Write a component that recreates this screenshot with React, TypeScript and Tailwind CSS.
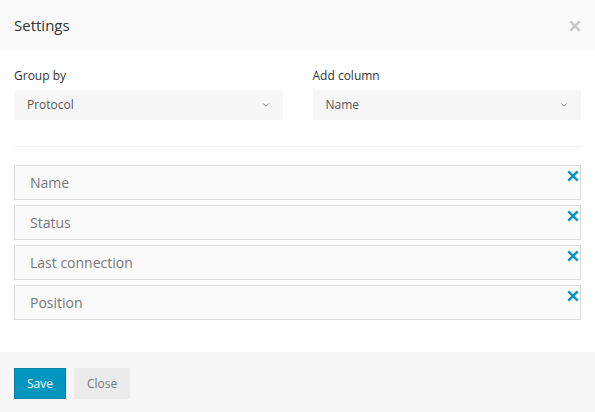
import { ChevronDown } from 'lucide-react';

const columns = ['Name', 'Status', 'Last connection', 'Position'];

function Cross({ className }: { className?: string }) {
  return (
    <svg viewBox="0 0 12 12" className={className} fill="currentColor">
      <path d="M2.2 0.4 6 4.2 9.8 0.4 11.6 2.2 7.8 6 11.6 9.8 9.8 11.6 6 7.8 2.2 11.6 0.4 9.8 4.2 6 0.4 2.2Z" />
    </svg>
  );
}

function SelectBox({ label, value }: { label: string; value: string }) {
  return (
    <div className="flex flex-1 flex-col">
      <label className="mb-[6px] text-[12px] leading-[17px] text-[#333]">{label}</label>
      <div className="flex h-[30px] items-center justify-between bg-[#f7f7f7] pl-[13px] pr-[12px]">
        <span className="text-[12px] text-[#555]">{value}</span>
        <ChevronDown size={10} strokeWidth={2} className="text-[#777]" />
      </div>
    </div>
  );
}

export default function App() {
  return (
    <div className="flex h-[412px] w-[595px] flex-col bg-white font-['Open_Sans',sans-serif]">
      <header className="flex h-[51px] items-center justify-between bg-[#f9f9f9] pl-[14px] pr-[14px]">
        <h4 className="text-[15px] text-[#333]">Settings</h4>
        <Cross className="h-[12px] w-[12px] text-[#c8c8c8]" />
      </header>

      <div className="flex flex-1 flex-col px-[14px] pt-[16px]">
        <div className="flex gap-[30px]">
          <SelectBox label="Group by" value="Protocol" />
          <SelectBox label="Add column" value="Name" />
        </div>

        <hr className="mb-[18px] mt-[26px] border-[#f2f2f2]" />

        <ul className="flex flex-col gap-[5px]">
          {columns.map(col => (
            <li
              key={col}
              className="relative flex h-[35px] items-center border border-[#dcdcdc] bg-[#fafafa] pl-[15px]"
            >
              <span className="text-[14px] text-[#777]">{col}</span>
              <Cross className="absolute right-[1px] top-[4px] h-[12px] w-[12px] text-[#0a96bf]" />
            </li>
          ))}
        </ul>
      </div>

      <footer className="flex h-[60px] items-start gap-[8px] bg-[#f7f7f7] px-[14px] pt-[16px]">
        <button className="h-[31px] border border-[#0384a8] bg-[#0096bf] px-[12px] text-[12px] text-white">
          Save
        </button>
        <button className="h-[31px] bg-[#ebebeb] px-[13px] text-[12px] text-[#777]">Close</button>
      </footer>
    </div>
  );
}
